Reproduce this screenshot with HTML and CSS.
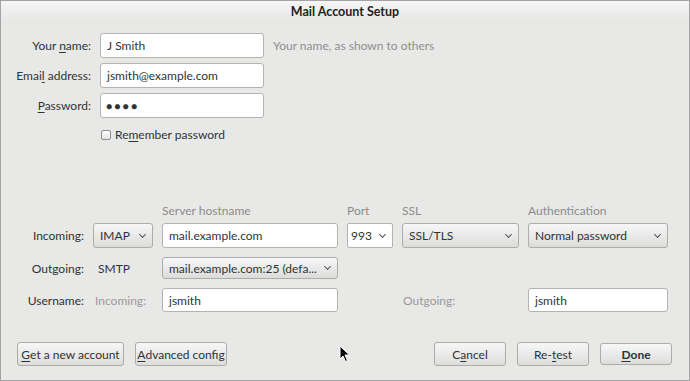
FILE: index.html
```html
<!DOCTYPE html>
<html>
<head>
<meta charset="utf-8">
<link rel="stylesheet" href="styles.css">
</head>
<body>
<div class="window">
  <div class="titlebar">Mail Account Setup</div>
  <div class="content">
    <div class="identity">
      <label class="lbl">Your <u>n</u>ame:</label>
      <div class="entry">J Smith</div>
      <span class="hint">Your name, as shown to others</span>

      <label class="lbl">Emai<u>l</u> address:</label>
      <div class="entry">jsmith@example.com</div>
      <span></span>

      <label class="lbl"><u>P</u>assword:</label>
      <div class="entry dots">●●●●</div>
      <span></span>

      <span></span>
      <div class="check"><span class="box"></span><span>Re<u>m</u>ember password</span></div>
      <span></span>
    </div>

    <div class="server">
      <span></span><span></span>
      <span class="head">Server hostname</span>
      <span class="head">Port</span>
      <span class="head">SSL</span>
      <span class="head">Authentication</span>

      <label class="lbl">Incoming:</label>
      <div class="combo">IMAP<span class="arrow"></span></div>
      <div class="entry">mail.example.com</div>
      <div class="portbox">993<span class="arrow"></span></div>
      <div class="combo">SSL/TLS<span class="arrow"></span></div>
      <div class="combo">Normal password<span class="arrow"></span></div>

      <label class="lbl">Outgoing:</label>
      <span class="plain">SMTP</span>
      <div class="combo">mail.example.com:25 (defa...<span class="arrow"></span></div>
      <span></span><span></span><span></span>

      <label class="lbl">Username:</label>
      <span class="sub">Incoming:</span>
      <div class="entry">jsmith</div>
      <span></span>
      <span class="sub out">Outgoing:</span>
      <div class="entry">jsmith</div>
    </div>

    <div class="buttons">
      <div class="left">
        <div class="btn get"><u>G</u>et a new account</div>
        <div class="btn adv"><u>A</u>dvanced config</div>
      </div>
      <div class="right">
        <div class="btn wide">C<u>a</u>ncel</div>
        <div class="btn wide">Re-<u>t</u>est</div>
        <div class="btn wide default"><u>D</u>one</div>
      </div>
    </div>
  </div>
  <svg class="cursor" width="12" height="18" viewBox="0 0 12 18"><path d="M1 1 L1 14 L4 11 L6.5 16.5 L8.5 15.5 L6 10 L10.5 10 Z" fill="#000" stroke="#fff" stroke-width="1"/></svg>
</div>
</body>
</html>
```

FILE: styles.css
```css
html, body {
  margin: 0;
  padding: 0;
  background: #e8e8e7;
}
body {
  font-family: Lato, "Open Sans", sans-serif;
  font-size: 12px;
  color: #2e3436;
}
.window {
  position: relative;
  width: 688px;
  height: 379px;
  border: 1px solid #a4a4a4;
  background: #e8e8e7;
  overflow: hidden;
}
.titlebar {
  height: 21px;
  line-height: 21px;
  text-align: center;
  font-weight: bold;
  font-size: 12.5px;
  color: #222;
  background: linear-gradient(#f6f6f6, #e6e6e5);
}
.content {
  padding: 11px 0 0 0;
}
.identity {
  display: grid;
  grid-template-columns: 90px 164px auto;
  column-gap: 9px;
  row-gap: 5px;
  grid-auto-rows: 25px;
  align-items: center;
}
.lbl {
  text-align: right;
  white-space: nowrap;
}
u { text-decoration: underline; text-underline-offset: 2px; }
.entry {
  box-sizing: border-box;
  height: 100%;
  display: flex;
  align-items: center;
  padding-left: 6px;
  background: #fff;
  border: 1px solid #b3b3b2;
  border-radius: 3px;
  white-space: nowrap;
  overflow: hidden;
}
.dots { letter-spacing: 2px; font-size: 10.5px; padding-left: 5px; }
.hint { color: #8f8f8f; }
.check {
  display: flex;
  align-items: center;
  gap: 4px;
  margin-left: 1px;
  margin-top: -2px;
}
.box {
  width: 8px;
  height: 8px;
  border: 1px solid #8e8e8e;
  border-radius: 2px;
  background: linear-gradient(#fff, #e2e2e2);
}
.server {
  margin-top: 59px;
  display: grid;
  grid-template-columns: 83px 60px 176px 46px 117px 140px;
  column-gap: 9px;
  grid-template-rows: 7px 25px 22px 24px;
  row-gap: 9px;
  align-items: center;
}
.server .entry, .server .combo, .server .portbox { align-self: stretch; }
.head { color: #8c8c8c; white-space: nowrap; line-height: 7px; }
.combo {
  box-sizing: border-box;
  display: flex;
  align-items: center;
  justify-content: space-between;
  padding: 0 7px 0 6px;
  background: linear-gradient(#f7f7f7, #dcdcdb);
  border: 1px solid #acacab;
  border-radius: 3px;
  white-space: nowrap;
}
.portbox {
  box-sizing: border-box;
  display: flex;
  align-items: center;
  justify-content: space-between;
  padding: 0 7px 0 3px;
  background: #fff;
  border: 1px solid #b3b3b2;
  border-radius: 2px;
}
.arrow {
  width: 4px;
  height: 4px;
  border-right: 1.3px solid #555;
  border-bottom: 1.3px solid #555;
  transform: rotate(45deg);
  margin-top: -3px;
  flex: none;
}
.plain { padding-left: 5px; }
.sub { color: #9a9a9a; padding-left: 2px; }
.sub.out { padding-left: 1px; }
.buttons {
  margin-top: 30px;
  display: flex;
  justify-content: space-between;
  padding: 0 17px 0 16px;
}
.left, .right { display: flex; gap: 11px; }
.btn {
  box-sizing: border-box;
  height: 24px;
  display: flex;
  align-items: center;
  justify-content: center;
  padding: 0 2px;
  background: linear-gradient(#f7f7f7, #dddddc);
  border: 1px solid #acacab;
  border-radius: 3px;
  white-space: nowrap;
}
.btn.get { width: 107px; }
.btn.adv { width: 92px; }
.btn.wide { width: 72px; }
.btn.default { font-weight: bold; height: 22px; margin-top: 1px; }
.cursor {
  position: absolute;
  left: 338px;
  top: 344px;
}
```
